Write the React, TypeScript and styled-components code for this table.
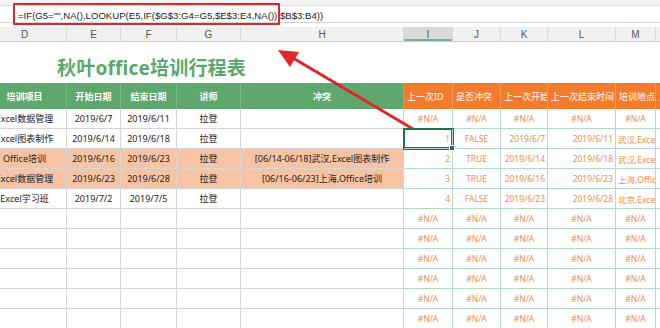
import styled, { createGlobalStyle } from "styled-components"

const COLS = "84px 54px 56px 64px 163px 49px 48px 47px 68px 40px 60px"
const LETTERS = ["D", "E", "F", "G", "H", "I", "J", "K", "L", "M", "N"]

type Align = "left" | "center" | "right"
type CellData = { text?: string; align?: Align; selected?: boolean }

const planRows: { cells: string[]; warm?: boolean }[] = [
  { cells: ["Excel数据管理", "2019/6/7", "2019/6/11", "拉登", ""] },
  { cells: ["Excel图表制作", "2019/6/14", "2019/6/18", "拉登", ""] },
  { cells: ["Office培训", "2019/6/16", "2019/6/23", "拉登", "[06/14-06/18]武汉,Excel图表制作"], warm: true },
  { cells: ["Excel数据管理", "2019/6/23", "2019/6/28", "拉登", "[06/16-06/23]上海,Office培训"], warm: true },
  { cells: ["Excel学习班", "2019/7/2", "2019/7/5", "拉登", ""] },
  { cells: ["", "", "", "", ""] },
  { cells: ["", "", "", "", ""] },
  { cells: ["", "", "", "", ""] },
  { cells: ["", "", "", "", ""] },
  { cells: ["", "", "", "", ""] },
  { cells: ["", "", "", "", ""] },
]

const na: CellData[] = [
  { text: "#N/A" }, { text: "#N/A" }, { text: "#N/A" }, { text: "#N/A" }, { text: "#N/A" }, { text: "" },
]

const calcRows: CellData[][] = [
  na,
  [
    { text: "1", align: "right", selected: true },
    { text: "FALSE" },
    { text: "2019/6/7", align: "right" },
    { text: "2019/6/11", align: "right" },
    { text: "武汉,Excel数据管理", align: "left" },
    { text: "" },
  ],
  [
    { text: "2", align: "right" },
    { text: "TRUE" },
    { text: "2019/6/14", align: "right" },
    { text: "2019/6/18", align: "right" },
    { text: "武汉,Excel图表制作", align: "left" },
    { text: "" },
  ],
  [
    { text: "3", align: "right" },
    { text: "TRUE" },
    { text: "2019/6/16", align: "right" },
    { text: "2019/6/23", align: "right" },
    { text: "上海,Office培训", align: "left" },
    { text: "" },
  ],
  [
    { text: "4", align: "right" },
    { text: "FALSE" },
    { text: "2019/6/23", align: "right" },
    { text: "2019/6/28", align: "right" },
    { text: "北京,Excel学习班", align: "left" },
    { text: "" },
  ],
  na, na, na, na, na, na,
]

const greenHeads = ["培训项目", "开始日期", "结束日期", "讲师", "冲突"]
const orangeHeads = ["上一次ID", "是否冲突", "上一次开始时间", "上一次结束时间", "培训地点", "上一次讲师"]

export default function App() {
  return (
    <>
      <GlobalStyle />
      <SWindow>
        <STopStrip />
        <SFormulaBar>
          <SFormula>=IF(G5="",NA(),LOOKUP(E5,IF($G$3:G4=G5,$E$3:E4,NA()),$B$3:B4))</SFormula>
        </SFormulaBar>
        <SGap />
        <SSheet>
          <SLetterRow>
            {LETTERS.map((l) => (
              <SLetter key={l} $active={l === "I"}>{l}</SLetter>
            ))}
          </SLetterRow>
          <STitleRow>
            <STitle>秋叶office培训行程表</STitle>
          </STitleRow>
          <SHeadRow>
            {greenHeads.map((h) => (
              <SHeadCell key={h} $kind="plan">{h}</SHeadCell>
            ))}
            {orangeHeads.map((h) => (
              <SHeadCell key={h} $kind="calc">{h}</SHeadCell>
            ))}
          </SHeadRow>
          {planRows.map((row, i) => (
            <SDataRow key={i}>
              {row.cells.map((c, j) => (
                <SPlanCell key={j} $warm={row.warm}>{c}</SPlanCell>
              ))}
              {calcRows[i].map((c, j) => (
                <SCalcCell key={j} $align={c.align ?? "center"} $selected={c.selected}>
                  {c.text}
                </SCalcCell>
              ))}
            </SDataRow>
          ))}
        </SSheet>
        <SRedBox />
        <SArrow width="660" height="328" viewBox="0 0 660 328">
          <line x1="430" y1="139" x2="293" y2="58" stroke="#e0262a" strokeWidth="3" strokeLinecap="round" />
          <polygon points="278,50 299,52 290,67" fill="#e0262a" />
        </SArrow>
      </SWindow>
    </>
  )
}

const GlobalStyle = createGlobalStyle`
  html, body {
    margin: 0;
    padding: 0;
    background: #fff;
  }
  body {
    font-family: "Noto Sans", "Noto Sans CJK SC", sans-serif;
  }
`

const SWindow = styled.div`
  position: relative;
  width: 660px;
  height: 328px;
  overflow: hidden;
  background: #fff;
`

const STopStrip = styled.div`
  height: 5px;
  background: #f2f2f2;
  border-bottom: 1px solid #e0e0e0;
`

const SFormulaBar = styled.div`
  height: 16px;
  display: flex;
  align-items: center;
  padding-left: 18px;
  background: #fff;
  border-bottom: 1px solid #d4d4d4;
`

const SFormula = styled.span`
  font-family: "Liberation Sans", Arial, sans-serif;
  font-size: 9.6px;
  color: #222;
  white-space: nowrap;
  transform: translateY(1px);
`

const SGap = styled.div`
  height: 4px;
  background: #fff;
`

const SSheet = styled.div`
  margin-left: -17px;
  width: 733px;
`

const SLetterRow = styled.div`
  display: grid;
  grid-template-columns: ${COLS};
  height: 14px;
  background: #f1f1f1;
  border-bottom: 1px solid #d0d0d0;
`

const SLetter = styled.div<{ $active?: boolean }>`
  display: flex;
  align-items: center;
  justify-content: center;
  font-family: "Liberation Sans", Arial, sans-serif;
  font-size: 10px;
  color: #555;
  border-right: 1px solid #dadada;
  background: ${(p) => (p.$active ? "#d9d9d9" : "transparent")};
  box-shadow: ${(p) => (p.$active ? "inset 0 -2px 0 #6fb792" : "none")};
`

const STitleRow = styled.div`
  height: 41px;
  display: flex;
  align-items: center;
  padding-left: 74px;
`

const STitle = styled.h1`
  margin: 0;
  font-family: "Noto Sans", "Noto Sans CJK SC", sans-serif;
  font-size: 19px;
  font-weight: bold;
  color: #5aa96c;
  letter-spacing: 0.2px;
  transform: translateY(4px);
`

const SHeadRow = styled.div`
  display: grid;
  grid-template-columns: ${COLS};
  height: 26px;
`

const SHeadCell = styled.div<{ $kind: "plan" | "calc" }>`
  display: flex;
  align-items: center;
  justify-content: ${(p) => (p.$kind === "plan" ? "center" : "flex-start")};
  padding-left: ${(p) => (p.$kind === "plan" ? "0" : "3px")};
  background: ${(p) => (p.$kind === "plan" ? "#5ea76d" : "#f27b2c")};
  color: #fff;
  font-size: 9px;
  font-weight: ${(p) => (p.$kind === "plan" ? "bold" : "normal")};
  white-space: nowrap;
  overflow: hidden;
  border-right: 1px solid ${(p) => (p.$kind === "plan" ? "rgba(255,255,255,0.18)" : "rgba(255,255,255,0.22)")};
`

const SDataRow = styled.div`
  display: grid;
  grid-template-columns: ${COLS};
  height: 20px;
`

const SPlanCell = styled.div<{ $warm?: boolean }>`
  display: flex;
  align-items: center;
  justify-content: center;
  font-size: 9px;
  color: #222;
  white-space: nowrap;
  overflow: hidden;
  background: ${(p) => (p.$warm ? "#f8c3a2" : "#fff")};
  border-right: 1px solid #d6d6d6;
  border-bottom: 1px solid #d6d6d6;
  box-sizing: border-box;
`

const SCalcCell = styled.div<{ $align: Align; $selected?: boolean }>`
  position: relative;
  display: flex;
  align-items: center;
  justify-content: ${(p) =>
    p.$align === "left" ? "flex-start" : p.$align === "right" ? "flex-end" : "center"};
  padding: 0 2px;
  font-size: 8.5px;
  color: #ee8e4c;
  white-space: nowrap;
  overflow: ${(p) => (p.$selected ? "visible" : "hidden")};
  background: #fff;
  border-right: 1px solid #b3dcc7;
  border-bottom: 1px solid #b3dcc7;
  box-sizing: border-box;
  box-shadow: ${(p) => (p.$selected ? "0 0 0 1px #217346, inset 0 0 0 1px #217346" : "none")};
  z-index: ${(p) => (p.$selected ? 1 : 0)};

  &::after {
    content: "";
    display: ${(p) => (p.$selected ? "block" : "none")};
    position: absolute;
    right: -3px;
    bottom: -3px;
    width: 4px;
    height: 4px;
    background: #217346;
    border: 1px solid #fff;
  }
`

const SRedBox = styled.div`
  position: absolute;
  left: 13px;
  top: 3px;
  width: 263px;
  height: 18px;
  border: 2px solid #e0262a;
  border-radius: 1px;
`

const SArrow = styled.svg`
  position: absolute;
  left: 0;
  top: 0;
  pointer-events: none;
`
